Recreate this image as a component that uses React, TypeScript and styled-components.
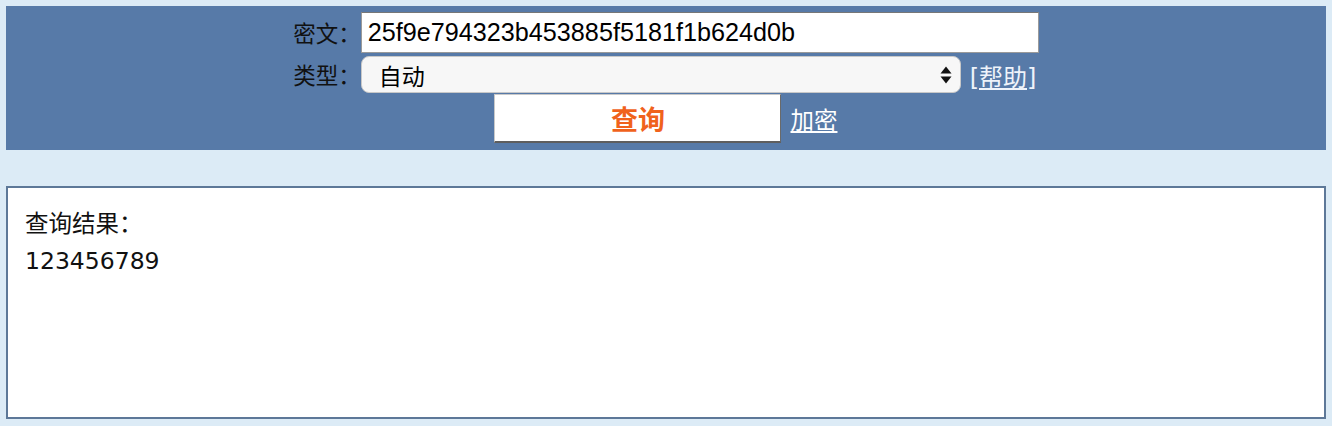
import React, { useState } from "react";
import styled, { createGlobalStyle } from "styled-components";

const GlobalStyle = createGlobalStyle`
  html, body {
    margin: 0;
    padding: 0;
    background: #dcebf6;
  }
  body {
    padding: 6px;
    font-family: "DejaVu Sans", "Noto Sans CJK SC", sans-serif;
    color: #000;
  }
`;

function App() {
  const [cipher, setCipher] = useState("25f9e794323b453885f5181f1b624d0b");
  const [kind, setKind] = useState("auto");

  return (
    <>
      <GlobalStyle />
      <Panel>
        <Form onSubmit={(e) => e.preventDefault()}>
          <Label>密文：</Label>
          <TextInput value={cipher} onChange={(e) => setCipher(e.target.value)} />
          <Label>类型：</Label>
          <SelectRow>
            <SelectWrap>
              <Select value={kind} onChange={(e) => setKind(e.target.value)}>
                <option value="auto">自动</option>
                <option value="md5">md5</option>
                <option value="sha1">sha1</option>
              </Select>
              <Arrows width="12" height="18" viewBox="0 0 12 18">
                <path d="M6 0.5 L11.5 7.5 H0.5 Z" fill="#111" />
                <path d="M6 17.5 L11.5 10.5 H0.5 Z" fill="#111" />
              </Arrows>
            </SelectWrap>
            <HelpLink href="#">[帮助]</HelpLink>
          </SelectRow>
          <ActionRow>
            <QueryButton type="submit">查询</QueryButton>
            <EncryptLink href="#">加密</EncryptLink>
          </ActionRow>
        </Form>
      </Panel>
      <Result>
        <ResultLine>查询结果：</ResultLine>
        <ResultLine>123456789</ResultLine>
      </Result>
    </>
  );
}

export default App;

const Panel = styled.div`
  background: #577aa8;
  padding: 6px 0 7px;
  display: flex;
  justify-content: center;
`;

const Form = styled.form`
  display: grid;
  grid-template-columns: auto 678px;
  row-gap: 3px;
  align-items: center;
  margin: 0;
`;

const Label = styled.span`
  font-family: "Noto Sans CJK SC", sans-serif;
  font-size: 22.5px;
  line-height: 37px;
  color: #111;
  text-align: right;
`;

const TextInput = styled.input`
  box-sizing: border-box;
  height: 41px;
  width: 100%;
  margin: 0;
  padding: 0 6px;
  border: 1px solid #9a9a9a;
  border-top-color: #777;
  background: #fff;
  font-family: "Liberation Sans", Arial, sans-serif;
  font-size: 25.2px;
  color: #000;
  outline: none;
`;

const SelectRow = styled.div`
  display: flex;
  align-items: center;
  gap: 9px;
`;

const SelectWrap = styled.div`
  position: relative;
  width: 600px;
  height: 37px;
`;

const Select = styled.select`
  appearance: none;
  box-sizing: border-box;
  width: 100%;
  height: 100%;
  margin: 0;
  padding: 0 0 0 17px;
  border: 1px solid #c8c8c8;
  border-radius: 8px;
  background: #f7f7f7;
  font-family: "Noto Sans CJK SC", sans-serif;
  font-size: 23px;
  color: #000;
  outline: none;
`;

const Arrows = styled.svg`
  position: absolute;
  right: 9px;
  top: 10px;
  pointer-events: none;
`;

const HelpLink = styled.a`
  font-family: "DejaVu Sans", "Noto Sans CJK SC", sans-serif;
  font-size: 24px;
  color: #eef3fa;
  text-decoration: underline;
  white-space: nowrap;
  margin-top: 2px;
`;

const ActionRow = styled.div`
  grid-column: 1 / -1;
  display: flex;
  justify-content: center;
  align-items: center;
  gap: 9px;
  margin-top: -2px;
`;

const QueryButton = styled.button`
  width: 287px;
  height: 49px;
  margin: 0;
  padding: 0;
  background: #fff;
  border: 1px solid #c9c9c9;
  border-right-color: #6a6a6a;
  border-bottom: 2px solid #5e5e5e;
  font-family: "Noto Sans CJK SC", sans-serif;
  font-weight: 700;
  font-size: 27px;
  color: #f0621c;
  cursor: pointer;
`;

const EncryptLink = styled.a`
  font-family: "Noto Sans CJK SC", sans-serif;
  font-size: 23.5px;
  color: #fff;
  text-decoration: underline;
`;

const Result = styled.div`
  margin-top: 36px;
  box-sizing: border-box;
  height: 233px;
  background: #fff;
  border: 2px solid #5d7898;
  padding: 18px 17px;
`;

const ResultLine = styled.div`
  font-size: 23.5px;
  line-height: 37px;
  color: #111;
`;
